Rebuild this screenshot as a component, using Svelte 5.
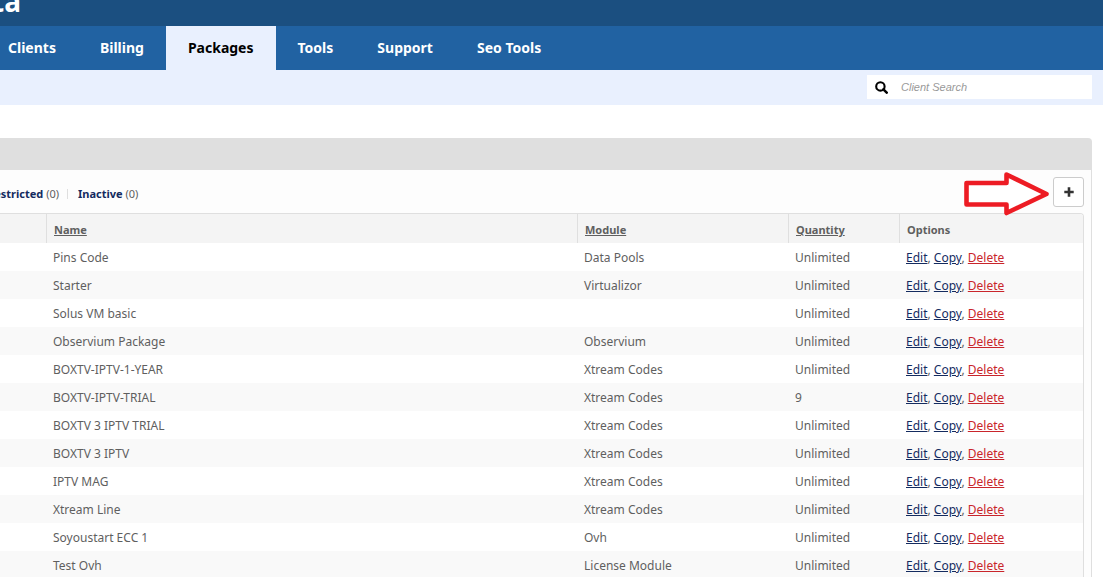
<script>
    let search = '';

    const tabs = ['Clients', 'Billing', 'Packages', 'Tools', 'Support', 'Seo Tools'];
    const activeTab = 'Packages';

    const filters = [
        { label: 'Restricted', count: 0 },
        { label: 'Inactive', count: 0 }
    ];

    const packages = [
        { name: 'Pins Code', module: 'Data Pools', quantity: 'Unlimited' },
        { name: 'Starter', module: 'Virtualizor', quantity: 'Unlimited' },
        { name: 'Solus VM basic', module: '', quantity: 'Unlimited' },
        { name: 'Observium Package', module: 'Observium', quantity: 'Unlimited' },
        { name: 'BOXTV-IPTV-1-YEAR', module: 'Xtream Codes', quantity: 'Unlimited' },
        { name: 'BOXTV-IPTV-TRIAL', module: 'Xtream Codes', quantity: '9' },
        { name: 'BOXTV 3 IPTV TRIAL', module: 'Xtream Codes', quantity: 'Unlimited' },
        { name: 'BOXTV 3 IPTV', module: 'Xtream Codes', quantity: 'Unlimited' },
        { name: 'IPTV MAG', module: 'Xtream Codes', quantity: 'Unlimited' },
        { name: 'Xtream Line', module: 'Xtream Codes', quantity: 'Unlimited' },
        { name: 'Soyoustart ECC 1', module: 'Ovh', quantity: 'Unlimited' },
        { name: 'Test Ovh', module: 'License Module', quantity: 'Unlimited' }
    ];
</script>

<div class="page">
    <header>
        <span class="logo">ta</span>
    </header>

    <nav>
        {#each tabs as tab}
            <a href="#{tab}" class:active={tab === activeTab}>{tab}</a>
        {/each}
    </nav>

    <div class="search-bar">
        <form class="search">
            <button type="submit" aria-label="Search">
                <svg width="13" height="13" viewBox="0 0 13 13">
                    <circle cx="5.4" cy="5.4" r="4.2" fill="none" stroke="#000" stroke-width="2.1" />
                    <path d="M8.4 8.4L11.7 11.7" stroke="#000" stroke-width="2.5" stroke-linecap="round" />
                </svg>
            </button>
            <input type="text" aria-label="Client Search" placeholder="Client Search" bind:value={search} />
        </form>
    </div>

    <main>
        <div class="panel-title"></div>
        <div class="panel">
            <div class="toolbar">
                <ul class="filters">
                    {#each filters as filter}
                        <li><a href="#{filter.label}">{filter.label}</a> ({filter.count})</li>
                    {/each}
                </ul>
                <!-- Points at the add button -->
                <svg class="arrow" width="88" height="46" viewBox="0 0 88 46">
                    <path d="M4.5 13H44.5V4.5L84.5 24L44.5 43V34.5H4.5Z" fill="#fff" stroke="#ed1c24" stroke-width="4.6" stroke-linejoin="round" />
                </svg>
                <button class="add" aria-label="Add package">
                    <svg width="10" height="10" viewBox="0 0 10 10">
                        <path d="M5 0.3V9.7M0.3 5H9.7" stroke="#333" stroke-width="2.6" />
                    </svg>
                </button>
            </div>

            <div class="table-wrap">
                <table>
                    <thead>
                        <tr>
                            <th class="col-id"></th>
                            <th><a href="#name">Name</a></th>
                            <th class="col-module"><a href="#module">Module</a></th>
                            <th class="col-quantity"><a href="#quantity">Quantity</a></th>
                            <th class="col-options">Options</th>
                        </tr>
                    </thead>
                    <tbody>
                        {#each packages as item}
                            <tr>
                                <td></td>
                                <td>{item.name}</td>
                                <td>{item.module}</td>
                                <td>{item.quantity}</td>
                                <td><a href="#edit">Edit</a>, <a href="#copy">Copy</a>, <a href="#delete" class="delete">Delete</a></td>
                            </tr>
                        {/each}
                    </tbody>
                </table>
            </div>
        </div>
    </main>
</div>

<style>
    .page {
        height: 100vh;
        overflow: hidden;
        background: #fff;
        color: #5f5f5f;
        font-family: "Noto Sans", "Open Sans", sans-serif;
        font-size: 12px;
    }

    header {
        height: 26px;
        background: #1b4f80;
        overflow: hidden;
        display: flex;
        align-items: flex-end;
    }

    .logo {
        color: #fff;
        font-size: 28px;
        line-height: 50px;
        font-weight: bold;
        margin-left: -8px;
    }

    nav {
        display: flex;
        height: 44px;
        background: #2162a2;
    }

    nav a {
        padding: 0 22px;
        line-height: 44px;
        font-size: 14px;
        font-weight: bold;
        color: #fff;
        text-decoration: none;
    }

    nav a:first-child {
        padding-left: 8px;
    }

    nav a.active {
        background: #e9f0fe;
        color: #000;
    }

    .search-bar {
        display: flex;
        justify-content: flex-end;
        padding: 5px 11px 6px;
        background: #e9f0fe;
    }

    .search {
        display: flex;
        width: 225px;
        height: 24px;
        background: #fff;
    }

    .search button {
        display: flex;
        align-items: center;
        border: none;
        background: none;
        padding: 1px 8px 0;
        cursor: pointer;
    }

    .search input {
        flex: 1;
        min-width: 0;
        border: none;
        outline: none;
        padding: 0 5px;
        background: none;
        font-family: "Liberation Sans", Arial, sans-serif;
        font-size: 11px;
        font-style: italic;
    }

    .search input::placeholder {
        color: #999;
    }

    main {
        margin: 33px 11px 0 0;
    }

    .panel-title {
        height: 32px;
        background: #dfdfdf;
        border-top-right-radius: 4px;
    }

    .panel {
        border-right: 1px solid #dfdfdf;
        padding-right: 7px;
        background: #fdfdfd;
    }

    .toolbar {
        position: relative;
        display: flex;
        justify-content: space-between;
        padding: 7px 0 6px;
    }

    .filters {
        display: flex;
        align-items: center;
        list-style: none;
        margin: 0 0 0 -13px;
        padding: 3px 0 0;
        font-size: 11px;
    }

    .filters li {
        line-height: 10px;
    }

    .filters li + li {
        border-left: 1px solid #dfdfdf;
        margin-left: 8px;
        padding-left: 10px;
    }

    .filters a {
        color: #142b5f;
        font-weight: bold;
        text-decoration: none;
    }

    .arrow {
        position: absolute;
        top: 0;
        right: 34px;
    }

    .add {
        display: flex;
        align-items: center;
        justify-content: center;
        width: 31px;
        height: 30px;
        padding: 0;
        border: 1px solid #ccc;
        border-radius: 3px;
        background: #fff;
        cursor: pointer;
    }

    .table-wrap {
        border: 1px solid #dfdfdf;
        border-left: none;
        border-top-right-radius: 4px;
        overflow: hidden;
    }

    table {
        width: 100%;
        border-collapse: separate;
        border-spacing: 0;
        table-layout: fixed;
    }

    th {
        height: 29px;
        box-sizing: border-box;
        padding: 2px 6px 0;
        background: #f4f4f4;
        font-size: 11px;
        text-align: left;
    }

    th + th {
        border-left: 1px solid #dfdfdf;
        padding-left: 7px;
    }

    th a {
        color: inherit;
    }

    .col-id {
        width: 46px;
    }

    .col-module {
        width: 211px;
    }

    .col-quantity {
        width: 111px;
    }

    .col-options {
        width: 184px;
    }

    td {
        height: 28px;
        box-sizing: border-box;
        padding: 2px 7px 0;
        background: #fff;
        line-height: 20px;
    }

    tbody tr:nth-child(even) td {
        background: #f9f9f9;
    }

    td a {
        color: #142b5f;
    }

    td a.delete {
        color: #c9252b;
    }
</style>
